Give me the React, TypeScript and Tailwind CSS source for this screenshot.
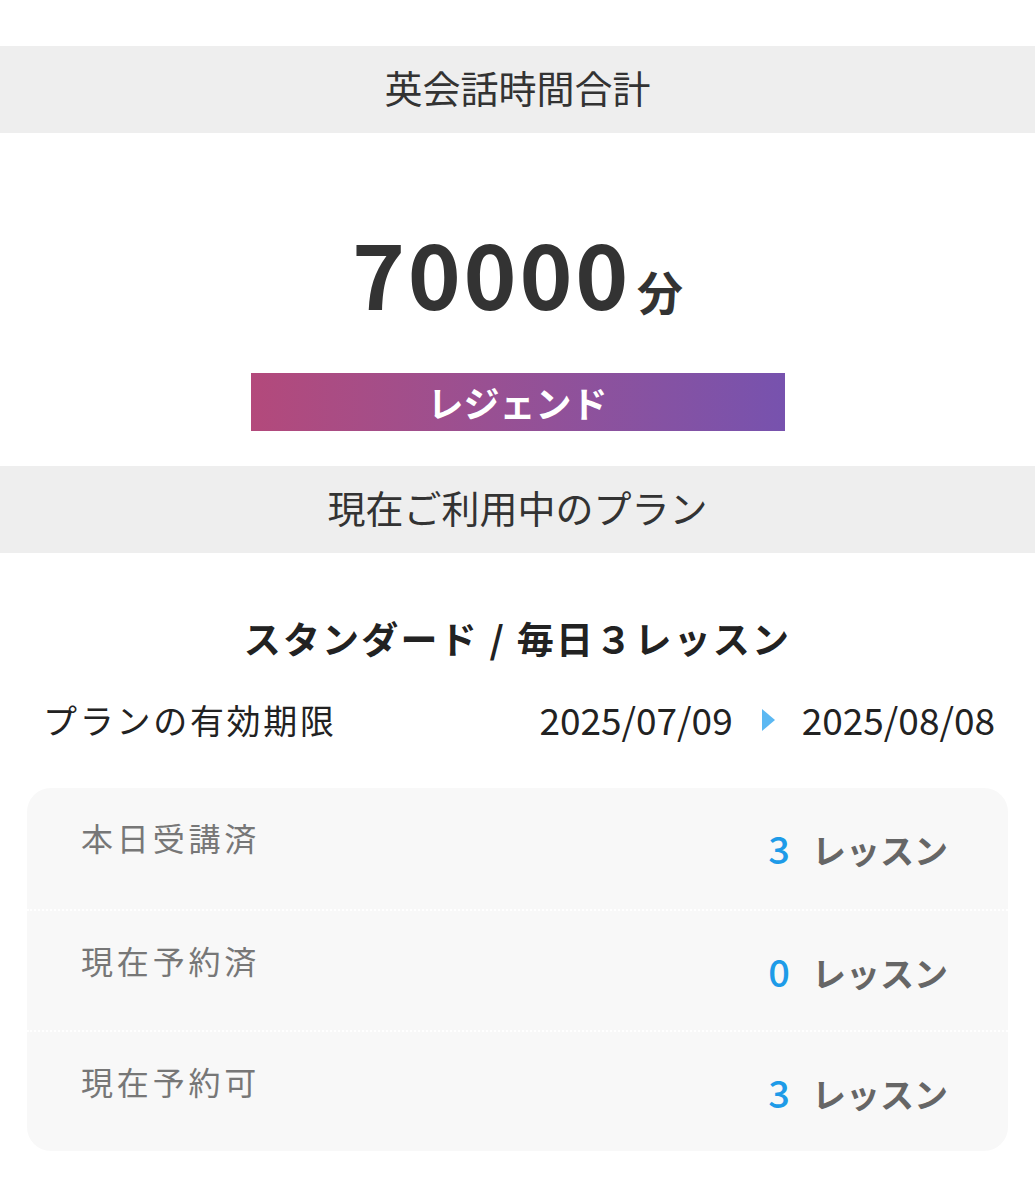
const rows = [
  { label: "本日受講済", count: 3 },
  { label: "現在予約済", count: 0 },
  { label: "現在予約可", count: 3 },
];

function SectionHeader({ children }: { children: React.ReactNode }) {
  return (
    <div className="flex h-[87px] items-center justify-center bg-[#eeeeee] pb-[6px] text-[38px] text-[#333333]">
      {children}
    </div>
  );
}

export default function App() {
  return (
    <div
      className="w-[1035px] bg-white pt-[46px] pb-[50px]"
      style={{ fontFamily: '"Noto Sans CJK JP", "Noto Sans", sans-serif' }}
    >
      <SectionHeader>英会話時間合計</SectionHeader>

      <div className="flex flex-col items-center">
        <div className="mt-[83px] flex items-baseline text-[#333333]">
          <span className="text-[90px] leading-[110px] font-bold tracking-[0.03em]">70000</span>
          <span className="ml-[6px] text-[46px] font-bold">分</span>
        </div>
        <div className="mt-[47px] flex h-[58px] w-[534px] items-center justify-center bg-gradient-to-r from-[#b3497b] to-[#7752ae] text-[36px] font-bold text-white">
          レジェンド
        </div>
      </div>

      <div className="mt-[35px]">
        <SectionHeader>現在ご利用中のプラン</SectionHeader>
      </div>

      <div className="mt-[58px] text-center text-[37px] leading-[54px] font-bold tracking-[0.06em] text-[#222222]">
        スタンダード / 毎日３レッスン
      </div>

      <div className="mt-[27px] flex items-center justify-between pl-[43px] pr-[40px] text-[#222222]">
        <span className="text-[34px] tracking-[0.08em]">プランの有効期限</span>
        <div className="flex items-center text-[37px]">
          <span>2025/07/09</span>
          <svg width="13" height="22" viewBox="0 0 13 22" className="mr-[27px] ml-[29px]">
            <path d="M0 0 L13 11 L0 22 Z" fill="#5bb8f2" />
          </svg>
          <span>2025/08/08</span>
        </div>
      </div>

      <div className="mx-[27px] mt-[40px] rounded-[24px] bg-[#f8f8f8]">
        {rows.map((row, i) => (
          <div
            key={row.label}
            className={
              "flex h-[121px] items-start justify-between pl-[54px] pr-[60px] pt-[25px]" +
              (i > 0 ? " border-t-2 border-dotted border-white" : "")
            }
          >
            <span className="text-[32px] tracking-[0.12em] text-[#777777]">{row.label}</span>
            <div className="flex items-baseline pt-[6px]">
              <span className="text-[38px] font-medium text-[#1e9be8]">{row.count}</span>
              <span className="ml-[22px] text-[34px] font-bold text-[#666666]">レッスン</span>
            </div>
          </div>
        ))}
      </div>
    </div>
  );
}
